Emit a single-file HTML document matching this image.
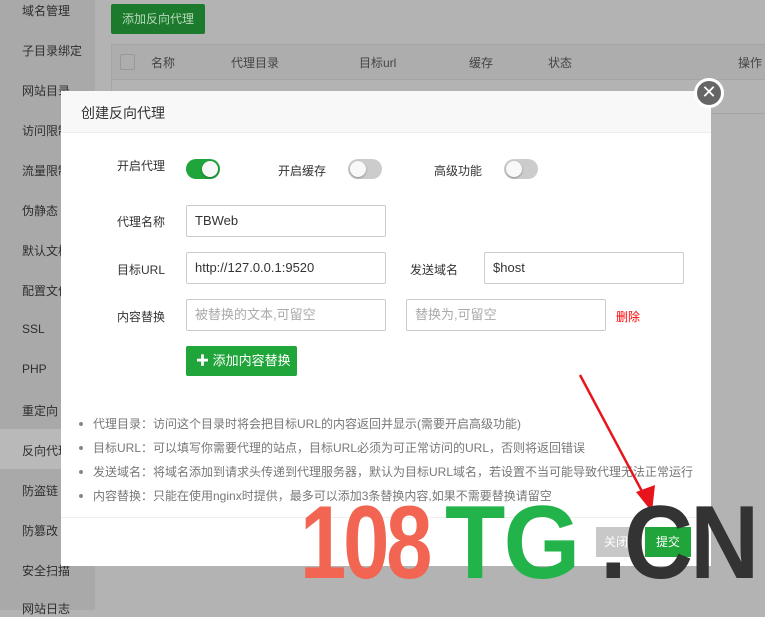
<!DOCTYPE html>
<html><head><meta charset="utf-8"><style>
*{margin:0;padding:0;box-sizing:border-box}
body{width:765px;height:610px;overflow:hidden;position:relative;background:#b3b3b3;font-family:"Liberation Sans","Noto Sans CJK SC",sans-serif;font-size:12px;color:#333}
.a{position:absolute;white-space:nowrap}
.side{position:absolute;left:0;top:0;width:95px;height:610px;background:#a9a9a9}
.si{position:absolute;left:22px;font-size:12px;color:#2e2e2e}
.inp{position:absolute;height:32px;border:1px solid #ccc;border-radius:2px;background:#fff;padding-left:8px;line-height:30px;font-size:13px;color:#333}
.ph{color:#aaa}
.lab{position:absolute;font-size:12px;color:#333}
.tg{position:absolute;width:34px;height:20px;border-radius:10px;background:#ccc}
.tg i{position:absolute;top:2px;left:2px;width:16px;height:16px;border-radius:50%;background:#f8f8f8;box-shadow:0 1px 2px rgba(0,0,0,.3)}
.tg.on{background:#20a53a}.tg.on i{left:16px}
li{list-style:none;position:absolute;left:93px;font-size:12px;color:#777}
li:before{content:"";position:absolute;left:-14px;top:7px;width:4px;height:4px;border-radius:50%;background:#888}
</style></head><body>
<div class="side">
<div class="si" style="top:2px">域名管理</div>
<div class="si" style="top:42px">子目录绑定</div>
<div class="si" style="top:82px">网站目录</div>
<div class="si" style="top:122px">访问限制</div>
<div class="si" style="top:162px">流量限制</div>
<div class="si" style="top:202px">伪静态</div>
<div class="si" style="top:242px">默认文档</div>
<div class="si" style="top:282px">配置文件</div>
<div class="si" style="top:322px">SSL</div>
<div class="si" style="top:362px">PHP</div>
<div class="si" style="top:402px">重定向</div>
<div style="position:absolute;left:0;top:429px;width:95px;height:40px;background:#b9b9b9"></div>
<div class="si" style="top:442px">反向代理</div>
<div class="si" style="top:482px">防盗链</div>
<div class="si" style="top:522px">防篡改</div>
<div class="si" style="top:562px">安全扫描</div>
<div class="si" style="top:600px">网站日志</div>
</div>
<div class="a" style="left:111px;top:4px;width:94px;height:30px;background:#1b7a2b;border-radius:2px;color:#b8d8bd;font-size:12px;line-height:30px;text-align:center">添加反向代理</div>
<div class="a" style="left:111px;top:44px;width:654px;height:36px;border:1px solid #a5a5a5;border-right:none;background:#adadad"></div>
<div class="a" style="left:111px;top:80px;width:654px;height:34px;border:1px solid #a5a5a5;border-top:none;border-right:none"></div>
<div class="a" style="left:120px;top:54px;width:15px;height:16px;border:1px solid #999;border-radius:2px"></div>
<div class="a" style="left:151px;top:54px;color:#444">名称</div>
<div class="a" style="left:231px;top:54px;color:#444">代理目录</div>
<div class="a" style="left:359px;top:54px;color:#444">目标url</div>
<div class="a" style="left:469px;top:54px;color:#444">缓存</div>
<div class="a" style="left:548px;top:54px;color:#444">状态</div>
<div class="a" style="left:738px;top:54px;color:#444">操作</div>

<div class="a" style="left:61px;top:91px;width:650px;height:475px;background:#fff"></div>
<div class="a" style="left:61px;top:91px;width:650px;height:42px;background:#f8f8f8;border-bottom:1px solid #eee"></div>
<div class="a" style="left:81px;top:103px;font-size:14px;color:#333">创建反向代理</div>
<div class="a" style="left:61px;top:517px;width:650px;height:49px;background:#fff;border-top:1px solid #eee"></div>
<div class="a" style="left:694px;top:78px;width:30px;height:30px;border-radius:50%;background:#666;border:3px solid #fff;color:#fff;font-size:18px;line-height:23px;text-align:center">✕</div>

<div class="lab" style="left:117px;top:157px">开启代理</div>
<div class="tg on" style="left:186px;top:159px"><i></i></div>
<div class="lab" style="left:278px;top:162px">开启缓存</div>
<div class="tg" style="left:348px;top:159px"><i></i></div>
<div class="lab" style="left:434px;top:162px">高级功能</div>
<div class="tg" style="left:504px;top:159px"><i></i></div>

<div class="lab" style="left:117px;top:213px">代理名称</div>
<div class="inp" style="left:186px;top:205px;width:200px">TBWeb</div>
<div class="lab" style="left:117px;top:261px">目标URL</div>
<div class="inp" style="left:186px;top:252px;width:200px">http://127.0.0.1:9520</div>
<div class="lab" style="left:410px;top:261px">发送域名</div>
<div class="inp" style="left:484px;top:252px;width:200px">$host</div>
<div class="lab" style="left:117px;top:308px">内容替换</div>
<div class="inp ph" style="left:186px;top:299px;width:200px">被替换的文本,可留空</div>
<div class="inp ph" style="left:406px;top:299px;width:200px">替换为,可留空</div>
<div class="lab" style="left:616px;top:308px;color:#f00">删除</div>
<div class="a" style="left:186px;top:346px;width:111px;height:30px;background:#20a53a;border-radius:2px;color:#fff;font-size:13px;line-height:30px;padding-left:10px"><b>✚</b> 添加内容替换</div>

<ul>
<li style="top:415px">代理目录：访问这个目录时将会把目标URL的内容返回并显示(需要开启高级功能)</li>
<li style="top:439px">目标URL：可以填写你需要代理的站点，目标URL必须为可正常访问的URL，否则将返回错误</li>
<li style="top:463px">发送域名：将域名添加到请求头传递到代理服务器，默认为目标URL域名，若设置不当可能导致代理无法正常运行</li>
<li style="top:487px">内容替换：只能在使用nginx时提供，最多可以添加3条替换内容,如果不需要替换请留空</li>
</ul>

<div class="a" style="left:596px;top:527px;width:40px;height:30px;background:#c8c8c8;color:#fff;line-height:30px;text-align:center">关闭</div>
<div class="a" style="left:645px;top:527px;width:46px;height:30px;background:#20a53a;color:#fff;line-height:30px;text-align:center">提交</div>

<svg class="a" style="left:0;top:0" width="765" height="610"><line x1="580" y1="375" x2="645" y2="497" stroke="#e8141c" stroke-width="2.5"/><polygon points="652,512 636,492 655,485" fill="#e8141c"/></svg>

<div class="a" style="left:300px;top:484px;font-size:104px;font-weight:bold;letter-spacing:-4px;color:#f26552;transform:scaleX(0.8);transform-origin:left">108</div>
<div class="a" style="left:445px;top:484px;font-size:104px;font-weight:bold;letter-spacing:-2px;color:#22b44a;transform:scaleX(0.95);transform-origin:left">TG</div>
<div class="a" style="left:600px;top:484px;font-size:104px;font-weight:bold;letter-spacing:-3px;color:#333;transform:scaleX(0.92);transform-origin:left">.CN</div>
</body></html>
